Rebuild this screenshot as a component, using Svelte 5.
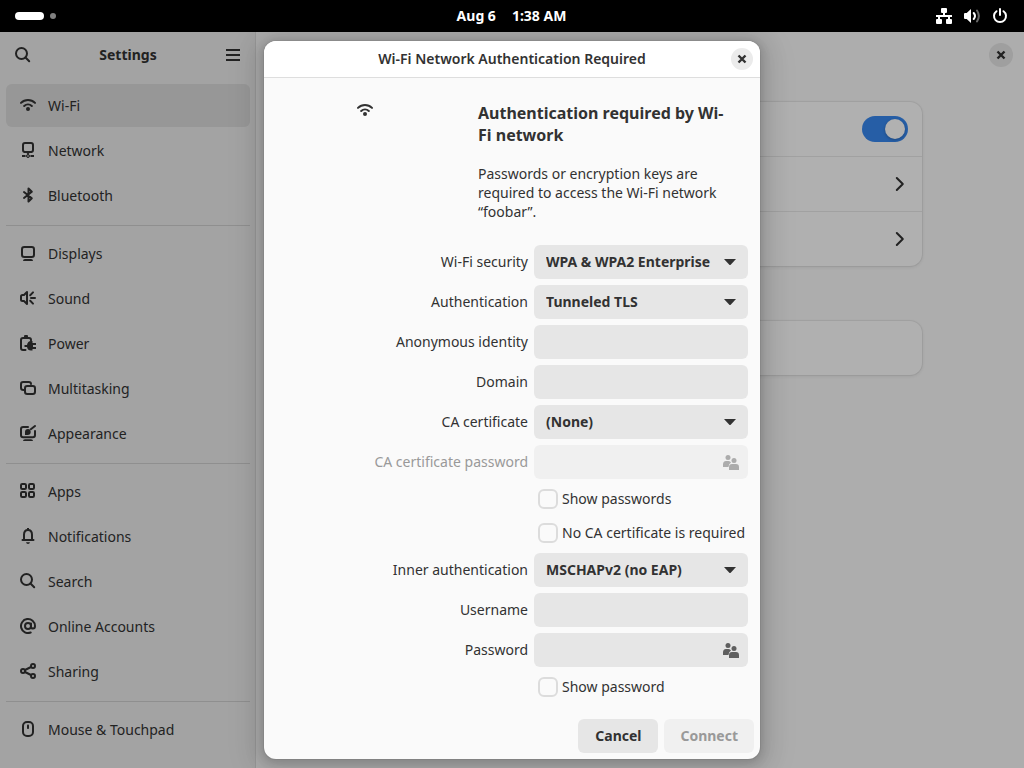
<script>
  const groups = [
    [
      { name: 'Wi-Fi', icon: 'wifi', active: true },
      { name: 'Network', icon: 'network' },
      { name: 'Bluetooth', icon: 'bluetooth' }
    ],
    [
      { name: 'Displays', icon: 'display' },
      { name: 'Sound', icon: 'sound' },
      { name: 'Power', icon: 'power' },
      { name: 'Multitasking', icon: 'multitasking' },
      { name: 'Appearance', icon: 'appearance' }
    ],
    [
      { name: 'Apps', icon: 'apps' },
      { name: 'Notifications', icon: 'bell' },
      { name: 'Search', icon: 'search' },
      { name: 'Online Accounts', icon: 'at' },
      { name: 'Sharing', icon: 'share' }
    ],
    [{ name: 'Mouse & Touchpad', icon: 'mouse' }]
  ];

  let security = $state('WPA & WPA2 Enterprise');
  let authentication = $state('Tunneled TLS');
  let certificate = $state('(None)');
  let inner = $state('MSCHAPv2 (no EAP)');
</script>

{#snippet icon(name)}
  <svg class="icon" viewBox="0 0 16 16" width="16" height="16" aria-hidden="true">
    {#if name === 'wifi'}
      <path class="line" d="M1 5.900A9.900 9.900 0 0 1 15 5.900M4.200 9A5.600 5.600 0 0 1 11.800 9" />
      <circle cx="8" cy="12" r="2" />
    {:else if name === 'network'}
      <rect class="line" x="3" y="1" width="10" height="9" rx="2" />
      <path d="M4 9h8v2H9.500L8 12.500 6.500 11H4zM2 13h3.500v2H2zM10.500 13H14v2h-3.500z" />
      <path d="M8 11.500l2.500 2.500L8 16.500 5.500 14z" />
      <circle class="hole" cx="8" cy="14" r=".8" />
    {:else if name === 'bluetooth'}
      <path class="line" d="M4 5l7.800 6.200L8.500 14.500V1.500l3.300 3.300L4 11" />
    {:else if name === 'display'}
      <rect class="line" x="2" y="2" width="12" height="10" rx="2.300" />
      <path d="M3 16q0-1.900 2-1.900h6q2 0 2 1.900z" />
    {:else if name === 'sound'}
      <path class="line" d="M7 2v12L4 11H2.500Q1 11 1 9.500v-3Q1 5 2.500 5H4z" />
      <path class="line" d="M11 8h4M10.200 5.200L13 2.400M10.200 10.800L13 13.600" />
    {:else if name === 'power'}
      <path class="line" d="M11 5.500V5q0-2-2-2H3Q1 3 1 5v8q0 2 2 2h2.500" />
      <path d="M4 2.500V1.200Q4 0 5 0h2q1 0 1 1.200v1.300z" />
      <path d="M4.500 10H7q.7-4 4-4h1.500v2H16v2h-3v2h3v2h-3.500v1.500H11Q7.700 15.500 7 12H4.500z" />
    {:else if name === 'multitasking'}
      <path class="line" d="M4 10H3.500Q1 10 1 7.800V4.200Q1 2 3.200 2h5.600Q11 2 11 4" />
      <rect class="line" x="5" y="6" width="10" height="8" rx="2.200" />
    {:else if name === 'appearance'}
      <path class="line" d="M8 2H3.200Q1 2 1 4v6q0 2.200 2.200 2.200h9.600Q15 12.200 15 10V6" />
      <path d="M3 16q0-1.800 2-1.800h6q2 0 2 1.800zM5 10V7q0-3 3-3 2.700 0 2.700 3T7.500 10z" />
      <path class="line" d="M10.800 4.200L15 1" />
    {:else if name === 'apps'}
      <g class="line">
        <rect x="1" y="1" width="5" height="5" rx="1.300" /><rect x="9" y="1" width="5" height="5" rx="1.300" />
        <rect x="1" y="9" width="5" height="5" rx="1.300" /><rect x="9" y="9" width="5" height="5" rx="1.300" />
      </g>
    {:else if name === 'bell'}
      <path class="line" d="M2.500 12h11M4 12V6.800C4 3.800 5.500 2 8 2s4 1.800 4 4.800V12" />
      <path d="M7 0h2v2H7zM6 14.300h4Q9.700 16 8 16t-2-1.700z" />
    {:else if name === 'search'}
      <circle class="line" cx="6.500" cy="6.500" r="5.500" /><path class="line" d="M10.500 10.500l3.700 3.700" />
    {:else if name === 'at'}
      <circle class="line" cx="8" cy="8" r="3" />
      <path class="line" d="M11 5.500v3.200q0 1.800 2 1.800T15 8a7 7 0 1 0-4.300 6.500" />
    {:else if name === 'share'}
      <g class="line">
        <circle cx="3" cy="8" r="2" /><circle cx="13" cy="3" r="2" /><circle cx="13" cy="13" r="2" />
        <path d="M5 7l6-3M5 9l6 3" />
      </g>
    {:else if name === 'mouse'}
      <rect class="line" x="3" y="1" width="10" height="14" rx="4" /><rect x="7" y="3.500" width="2" height="4.500" rx=".8" />
    {:else if name === 'menu'}
      <path d="M1 2h14v2H1zM1 7h14v2H1zM1 12h14v2H1z" />
    {:else if name === 'close'}
      <path class="cross" d="M4.500 4.500l7 7M11.500 4.500l-7 7" />
    {:else if name === 'chevron'}
      <path class="line" d="M4.800 2L10.800 8l-6 6" />
    {:else if name === 'down'}
      <path d="M2 5h12L8.700 10.700Q8 11.300 7.300 10.700z" />
    {:else if name === 'wired'}
      <path d="M6 0h4q1 0 1 1v3q0 1-1 1H9v2h7v2h-2v2h1q1 0 1 1v3q0 1-1 1h-4q-1 0-1-1v-3q0-1 1-1h1V9H4v2h1q1 0 1 1v3q0 1-1 1H1q-1 0-1-1v-3q0-1 1-1h1V9H0V7h7V5H6Q5 5 5 4V1q0-1 1-1z" />
    {:else if name === 'volume'}
      <path d="M7 1v14l-4.300-4H1q-1 0-1-1V6q0-1 1-1h1.700z" />
      <path class="line" d="M9.700 5q2.600 3 0 6" />
      <path class="line faint" d="M13 2.500q3.700 5.500 0 11" />
    {:else if name === 'shutdown'}
      <path class="line" d="M4.500 3.200a6 6 0 1 0 7 0M8 1v6" />
    {:else if name === 'people'}
      <circle cx="5" cy="3.500" r="2.500" /><circle cx="11" cy="6.500" r="2.500" />
      <path d="M0 13v-2.500Q0 7 3 7h2.500q1.800 0 2.500 1.500Q5.700 9.500 5.500 13zM6 16v-2.800Q6 10 9 10h4q3 0 3 3.200V16z" />
    {/if}
  </svg>
{/snippet}

<div class="desktop">
  <header class="topbar">
    <div class="workspaces"><span class="pill"></span><span class="dot"></span></div>
    <div class="clock"><span>Aug 6</span><span>1:38 AM</span></div>
    <div class="status">{@render icon('wired')}{@render icon('volume')}{@render icon('shutdown')}</div>
  </header>

  <div class="window">
    <aside class="sidebar">
      <div class="sidebar-head">
        <button class="flat" aria-label="Search settings">{@render icon('search')}</button>
        <h1>Settings</h1>
        <button class="flat" aria-label="Main menu">{@render icon('menu')}</button>
      </div>
      <nav>
        {#each groups as group}
          <ul>
            {#each group as item}
              <li>
                <a href="#{item.icon}" class:active={item.active}>
                  {@render icon(item.icon)}<span>{item.name}</span>
                </a>
              </li>
            {/each}
          </ul>
        {/each}
      </nav>
    </aside>

    <main>
      <div class="main-head">
        <button class="close large" aria-label="Close window">{@render icon('close')}</button>
      </div>
      <div class="cards">
        <div class="card">
          <div class="card-row">
            <input class="switch" type="checkbox" role="switch" aria-label="Wi-Fi" checked />
          </div>
          <button class="card-row" aria-label="Saved networks">{@render icon('chevron')}</button>
          <button class="card-row" aria-label="Hidden network">{@render icon('chevron')}</button>
        </div>
        <div class="card"><div class="card-row"></div></div>
      </div>
    </main>

    <div class="overlay">
      <div class="dialog" role="dialog" aria-labelledby="dialog-title">
        <header class="dialog-head">
          <h2 id="dialog-title">Wi-Fi Network Authentication Required</h2>
          <button class="close" aria-label="Close">{@render icon('close')}</button>
        </header>

        <form onsubmit={(e) => e.preventDefault()}>
          <div class="intro">
            {@render icon('wifi')}
            <div>
              <h3>Authentication required by Wi-Fi network</h3>
              <p>Passwords or encryption keys are required to access the Wi-Fi network “foobar”.</p>
            </div>
          </div>

          <div class="fields">
            <label for="security">Wi-Fi security</label>
            <div class="control">
              <select id="security" bind:value={security}><option>WPA &amp; WPA2 Enterprise</option></select>
              {@render icon('down')}
            </div>

            <label for="authentication">Authentication</label>
            <div class="control">
              <select id="authentication" bind:value={authentication}><option>Tunneled TLS</option></select>
              {@render icon('down')}
            </div>

            <label for="identity">Anonymous identity</label>
            <div class="control"><input id="identity" type="text" /></div>

            <label for="domain">Domain</label>
            <div class="control"><input id="domain" type="text" /></div>

            <label for="certificate">CA certificate</label>
            <div class="control">
              <select id="certificate" bind:value={certificate}><option>(None)</option></select>
              {@render icon('down')}
            </div>

            <label class="disabled" for="ca-password">CA certificate password</label>
            <div class="control people disabled">
              <input id="ca-password" type="password" disabled />
              {@render icon('people')}
            </div>

            <label class="check"><input type="checkbox" /><span>Show passwords</span></label>
            <label class="check"><input type="checkbox" /><span>No CA certificate is required</span></label>

            <label for="inner">Inner authentication</label>
            <div class="control">
              <select id="inner" bind:value={inner}><option>MSCHAPv2 (no EAP)</option></select>
              {@render icon('down')}
            </div>

            <label for="username">Username</label>
            <div class="control"><input id="username" type="text" /></div>

            <label for="password">Password</label>
            <div class="control people">
              <input id="password" type="password" />
              {@render icon('people')}
            </div>

            <label class="check"><input type="checkbox" /><span>Show password</span></label>
          </div>

          <footer>
            <button class="action" type="button">Cancel</button>
            <button class="action" type="submit" disabled>Connect</button>
          </footer>
        </form>
      </div>
    </div>
  </div>
</div>

<style>
  :global(body) {
    margin: 0;
    background: #000;
  }

  .desktop,
  .desktop * {
    box-sizing: border-box;
  }

  .desktop {
    display: flex;
    flex-direction: column;
    height: 100vh;
    overflow: hidden;
    font: 14px/19px 'Noto Sans', sans-serif;
    color: #222;
  }

  h1, h2, h3, p, ul {
    margin: 0;
    padding: 0;
  }

  button, input, select {
    margin: 0;
    border: 0;
    font: inherit;
    color: inherit;
  }

  .icon {
    display: block;
    flex: none;
    fill: currentColor;
  }

  .line, .cross {
    fill: none;
    stroke: currentColor;
    stroke-width: 2;
    stroke-linejoin: round;
    stroke-linecap: round;
  }

  .cross {
    stroke-width: 2.4;
    stroke-linecap: butt;
  }

  .faint {
    opacity: 0.4;
  }

  .hole {
    fill: #a3a3a3;
  }

  .topbar {
    display: grid;
    grid-template-columns: 1fr auto 1fr;
    align-items: center;
    flex: none;
    height: 32px;
    padding: 0 16px 0 15px;
    background: #000;
    color: #fff;
    font-weight: 700;
  }

  .workspaces, .clock, .status {
    display: flex;
    align-items: center;
  }

  .workspaces {
    gap: 6px;
  }

  .pill {
    width: 29px;
    height: 8px;
    border-radius: 4px;
    background: #fff;
  }

  .dot {
    width: 6px;
    height: 6px;
    border-radius: 50%;
    background: #808080;
  }

  .clock {
    gap: 16px;
    padding-bottom: 2px;
  }

  .status {
    justify-content: flex-end;
    gap: 12px;
  }

  .window {
    position: relative;
    display: flex;
    flex: 1;
    min-height: 0;
    background: #adadad;
  }

  .sidebar {
    flex: none;
    width: 256px;
    border-right: 1px solid #989898;
    background: #a3a3a3;
  }

  .sidebar-head {
    display: flex;
    align-items: center;
    justify-content: space-between;
    height: 46px;
    padding: 0 5px 0 6px;
  }

  h1, h2 {
    padding-bottom: 2px;
    font-size: 14px;
    font-weight: 700;
  }

  h2 {
    font-weight: 600;
  }

  .flat {
    display: grid;
    place-items: center;
    width: 34px;
    height: 34px;
    padding: 0;
    background: none;
  }

  nav {
    padding: 6px 5px 6px 6px;
  }

  ul {
    display: grid;
    gap: 2px;
    list-style: none;
  }

  ul + ul {
    margin-top: 8px;
    padding-top: 6px;
    border-top: 1px solid #8f8f8f;
  }

  nav a {
    display: flex;
    align-items: center;
    gap: 12px;
    height: 43px;
    padding: 0 14px;
    border-radius: 6px;
    color: inherit;
    text-decoration: none;
  }

  nav .icon,
  nav :global(.icon) {
    margin-bottom: 1px;
  }

  nav a.active {
    background: #979797;
  }

  main {
    flex: 1;
    min-width: 0;
  }

  .main-head {
    display: flex;
    align-items: center;
    justify-content: flex-end;
    height: 46px;
    padding: 0 11px;
  }

  .close {
    display: grid;
    place-items: center;
    width: 22px;
    height: 22px;
    padding: 0;
    border-radius: 50%;
    background: #ebebeb;
  }

  .close.large {
    width: 24px;
    height: 24px;
    background: #9f9f9f;
  }

  .cards {
    display: grid;
    gap: 55px;
    max-width: 588px;
    margin: 0 auto;
    padding: 24px 12px;
  }

  .card {
    border-radius: 12px;
    background: #b0b0b0;
    box-shadow: 0 0 0 1px rgba(0, 0, 0, 0.05), 0 1px 3px 1px rgba(0, 0, 0, 0.06);
  }

  .card-row {
    display: flex;
    align-items: center;
    justify-content: flex-end;
    width: 100%;
    height: 54px;
    padding: 0 14px;
    background: none;
  }

  .card-row + .card-row {
    height: 55px;
    border-top: 1px solid #a1a1a1;
  }

  .switch {
    appearance: none;
    width: 46px;
    height: 26px;
    padding: 3px;
    border-radius: 13px;
    background: #265ea6;
  }

  .switch::before {
    content: '';
    display: block;
    width: 20px;
    height: 20px;
    margin-left: auto;
    border-radius: 50%;
    background: #b1b1b1;
    box-shadow: 0 1px 3px rgba(0, 0, 0, 0.25);
  }

  .overlay {
    position: absolute;
    inset: 0;
    display: flex;
    align-items: center;
    justify-content: center;
    overflow: hidden;
  }

  .dialog {
    width: 496px;
    max-width: 100%;
    border-radius: 12px;
    background: #fafafa;
    color: #323232;
    box-shadow:
      0 2px 8px 2px rgba(0, 0, 0, 0.13),
      0 3px 20px 10px rgba(0, 0, 0, 0.09),
      0 6px 32px 16px rgba(0, 0, 0, 0.04),
      0 0 0 1px rgba(0, 0, 0, 0.05);
  }

  .dialog-head {
    display: grid;
    grid-template-columns: 1fr auto 1fr;
    align-items: center;
    height: 37px;
    padding: 0 7px;
    border-bottom: 1px solid #dedede;
    border-radius: 12px 12px 0 0;
    background: #fff;
  }

  .dialog-head h2 {
    grid-column: 2;
  }

  .dialog-head .close {
    justify-self: end;
  }

  form {
    padding: 24px 6px 6px;
  }

  .intro {
    display: grid;
    grid-template-columns: 178px 1fr;
    gap: 24px;
    padding: 0 24px 0 6px;
  }

  .intro > :global(.icon) {
    justify-self: center;
  }

  h3 {
    margin-bottom: 18px;
    font-size: 16px;
    line-height: 22px;
    font-weight: 700;
  }

  .fields {
    display: grid;
    grid-template-columns: 1fr 214px;
    gap: 6px;
    align-items: center;
    padding: 24px 6px 18px;
  }

  .fields > label {
    padding-bottom: 2px;
    text-align: right;
  }

  .fields > label.disabled {
    color: #999;
  }

  .fields > .check {
    grid-column: 2;
    display: flex;
    align-items: center;
    gap: 4px;
    height: 28px;
    padding: 0 0 0 4px;
    text-align: left;
    white-space: nowrap;
  }

  .check span {
    padding-bottom: 2px;
  }

  .check input {
    appearance: none;
    width: 20px;
    height: 20px;
    border: 2px solid #dcdcdc;
    border-radius: 6px;
  }

  .control {
    display: grid;
    align-items: center;
    height: 34px;
    border-radius: 6px;
    background: #e6e6e6;
  }

  .control > :global(*) {
    grid-area: 1 / 1;
  }

  .control > :global(.icon) {
    justify-self: end;
    margin-right: 10px;
    pointer-events: none;
  }

  .control.people > :global(.icon) {
    margin-right: 9px;
  }

  .control.people {
    color: #5f5f5f;
  }

  .control.disabled {
    background: #f0f0f0;
    color: #acacac;
  }

  .control select,
  .control input {
    appearance: none;
    width: 100%;
    height: 34px;
    padding: 0 12px 2px;
    border-radius: 6px;
    background: none;
  }

  select {
    font-weight: 700;
  }

  footer {
    display: flex;
    justify-content: flex-end;
    gap: 6px;
  }

  .action {
    min-width: 80px;
    height: 34px;
    padding: 0 16px 2px;
    border-radius: 6px;
    background: #e6e6e6;
    font-weight: 700;
  }

  .action:disabled {
    background: #f0f0f0;
    color: #999;
  }
</style>
